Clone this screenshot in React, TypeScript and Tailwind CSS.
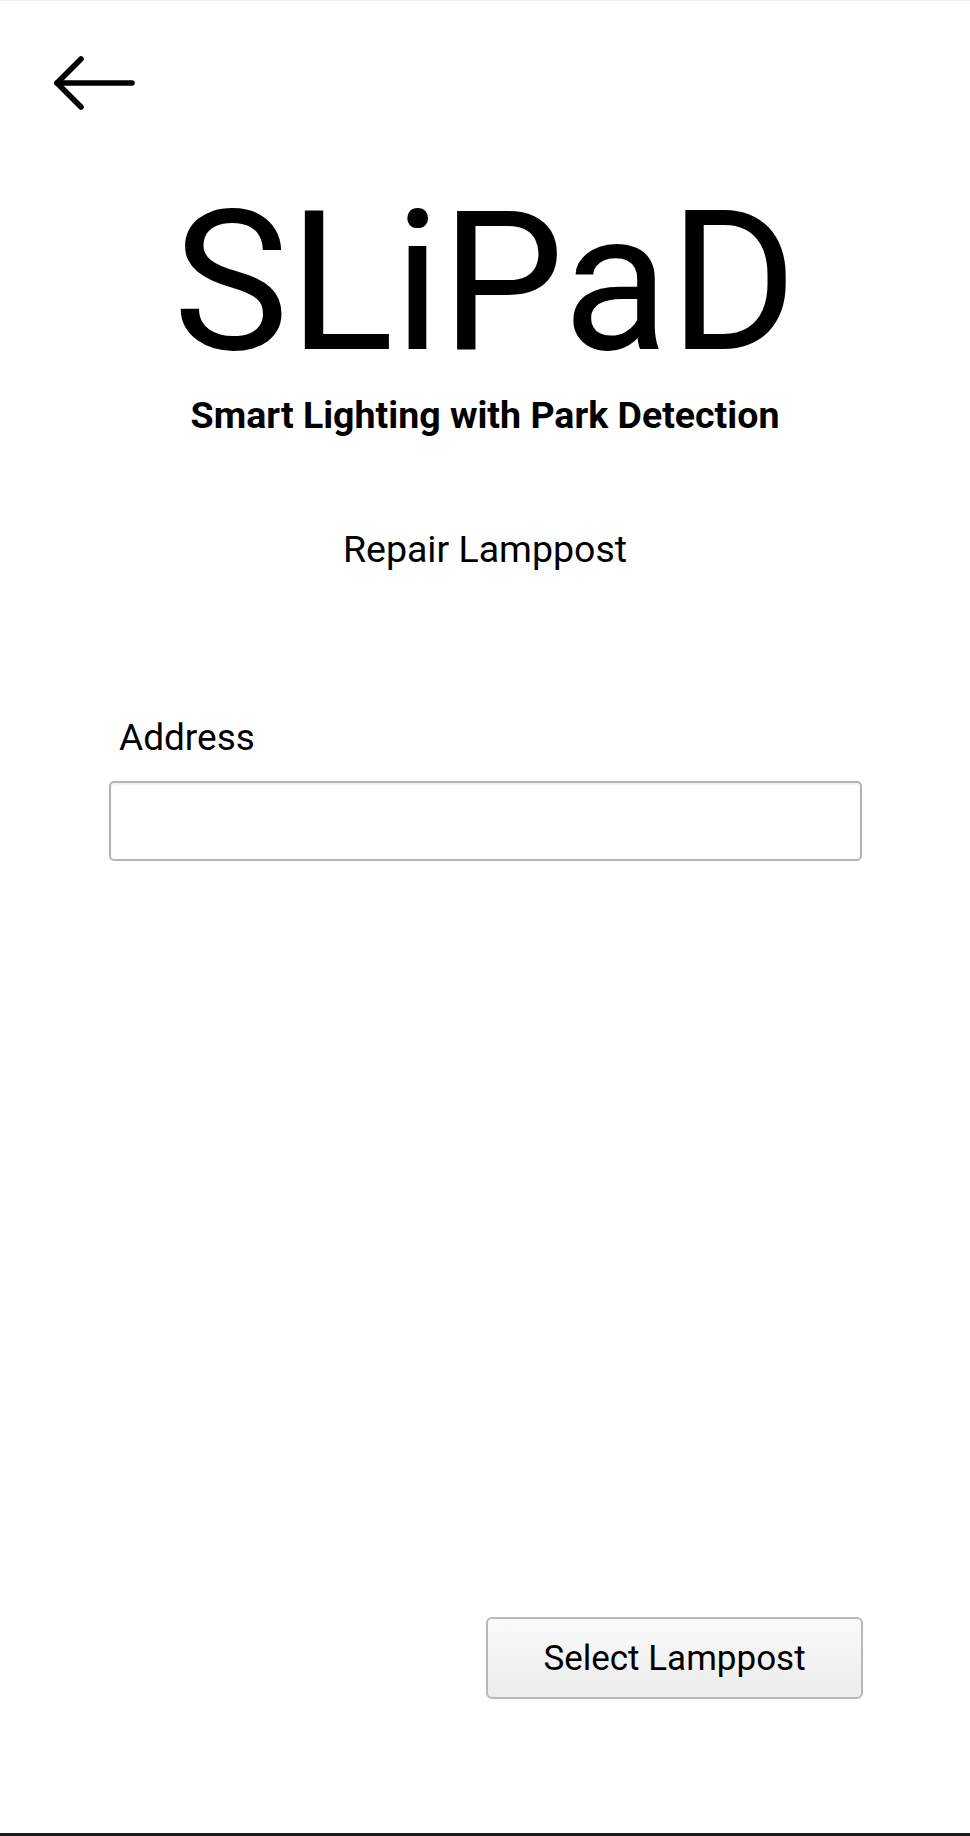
function BackArrow() {
  return (
    <svg width="82" height="56" viewBox="0 0 82 56" fill="none" stroke="#000" strokeWidth="5.5" strokeLinecap="round" strokeLinejoin="round">
      <path d="M4 27 H79" />
      <path d="M28 3 L4 27 L28 51" />
    </svg>
  );
}

export default function App() {
  return (
    <div className="h-[1836px] w-[970px] bg-white flex flex-col text-black border-t border-[#ececec] border-b-[3px] border-b-[#1a1a1a] font-['Roboto','Liberation_Sans',sans-serif]">
      <div className="pl-[53px] pt-[55px] h-[110px]">
        <BackArrow />
      </div>

      <h1 className="mt-[74px] text-center text-[195px] leading-none font-normal">SLiPaD</h1>
      <p className="mt-[17px] text-center text-[37.5px] leading-none font-bold">Smart Lighting with Park Detection</p>

      <p className="mt-[96px] text-center text-[37.5px] leading-none">Repair Lamppost</p>

      <div className="ml-[109px] mr-[108px] mt-[151px] flex flex-col">
        <label className="pl-[10px] text-[37px] leading-none">Address</label>
        <input
          type="text"
          className="mt-[25px] h-[80px] w-full rounded-[5px] border-2 border-[#b4b4b4] bg-white shadow-[inset_0_2px_2px_rgba(0,0,0,0.06)] outline-none px-3 text-[32px]"
        />
        <div className="mt-[756px] -mr-[1px] flex justify-end">
          <button className="h-[82px] w-[377px] rounded-[6px] border-2 border-[#b8b8b8] bg-gradient-to-b from-[#fafafa] to-[#ececec] text-[35px] leading-none">
            Select Lamppost
          </button>
        </div>
      </div>
    </div>
  );
}
